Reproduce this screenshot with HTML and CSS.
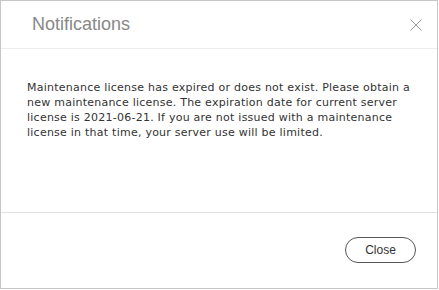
FILE: index.html
```html
<!DOCTYPE html>
<html lang="en">
<head>
    <meta charset="UTF-8">
    <title>Notifications</title>
    <link rel="stylesheet" href="styles.css">
</head>
<body>
    <div class="dialog">
        <div class="dialog-header">
            <div class="dialog-title">Notifications</div>
            <button class="dialog-x" aria-label="Close">
                <svg width="12" height="12" viewBox="0 0 12 12">
                    <path d="M0.5 0.5 L11.5 11.5 M11.5 0.5 L0.5 11.5" stroke="#9a9a9a" stroke-width="1" fill="none"/>
                </svg>
            </button>
        </div>
        <div class="dialog-body">
            Maintenance license has expired or does not exist. Please obtain a new maintenance license. The expiration date for current server license is 2021-06-21. If you are not issued with a maintenance license in that time, your server use will be limited.
        </div>
        <div class="dialog-footer">
            <button class="btn-close">Close</button>
        </div>
    </div>
</body>
</html>
```

FILE: styles.css
```css
* {
    margin: 0;
    padding: 0;
    box-sizing: border-box;
}

body {
    background: #fff;
    font-family: 'Liberation Sans', Arial, sans-serif;
}

.dialog {
    width: 438px;
    height: 289px;
    border: 1px solid #c6c6c6;
    background: #fff;
    display: flex;
    flex-direction: column;
}

.dialog-header {
    height: 48px;
    border-bottom: 1px solid #ededed;
    display: flex;
    align-items: center;
    justify-content: space-between;
    padding: 0 15px 0 31px;
}

.dialog-title {
    font-size: 18px;
    color: #888;
}

.dialog-x {
    background: none;
    border: none;
    width: 12px;
    height: 12px;
    display: flex;
}

.dialog-body {
    flex-grow: 1;
    padding: 31px 16px 0 26px;
    font-family: 'DejaVu Sans', Tahoma, sans-serif;
    font-size: 11px;
    letter-spacing: 0.24px;
    line-height: 15px;
    color: #333;
}

.dialog-footer {
    height: 76px;
    border-top: 1px solid #e2e2e2;
    display: flex;
    align-items: center;
    justify-content: flex-end;
    padding: 0 21px 2px 0;
}

.btn-close {
    width: 71px;
    height: 26px;
    border: 1px solid #555;
    border-radius: 13px;
    background: #fff;
    font-family: 'Liberation Sans', Arial, sans-serif;
    font-size: 12px;
    color: #333;
}
```
